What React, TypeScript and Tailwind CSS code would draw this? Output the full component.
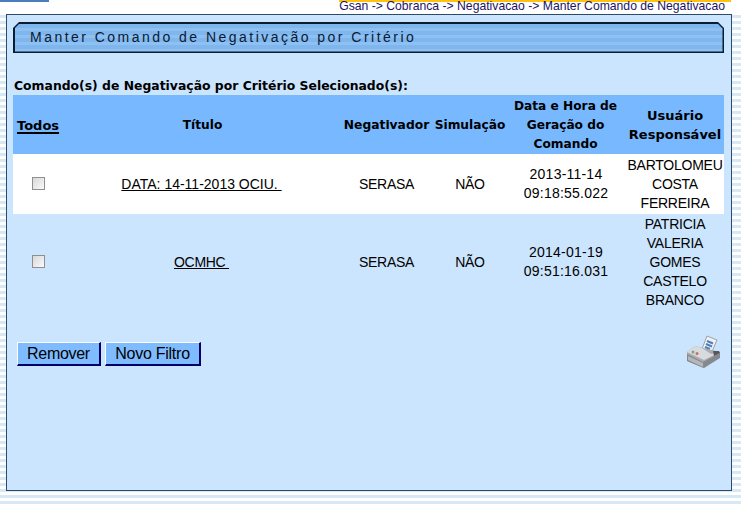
import React from 'react';

const rows = [
  { titulo: 'DATA: 14-11-2013 OCIU. ', data: '2013-11-14', hora: '09:18:55.022', usuario: 'BARTOLOMEU COSTA FERREIRA', bg: 'bg-white', h: 'h-[60px]', track: 'tracking-normal' },
  { titulo: 'OCMHC ', data: '2014-01-19', hora: '09:51:16.031', usuario: 'PATRICIA VALERIA GOMES CASTELO BRANCO', bg: 'bg-[#cbe5fe]', h: 'h-[96px]', track: 'tracking-[-0.3px]' },
];

const Printer = () => (
  <svg width="36" height="34" viewBox="0 0 36 34">
    <path d="M16 14 L21 1 L31 5 L25 19 Z" fill="#eef2f6" stroke="#8a8f96" strokeWidth="0.8" />
    <path d="M21 6 L27 8.5 M20 9 L26 11.5 M19 12 L24 14" stroke="#4f7fb8" strokeWidth="2" />
    <path d="M1 17 L9 11 L34 17 L34 22 L17 33 L1 26 Z" fill="#a9acb0" />
    <path d="M1 17 L9 11 L16 13 L25 19 L34 17 L18 25 Z" fill="#d8dadd" />
    <path d="M1 19 L17 27 L34 18 L34 23 L18 33 L1 26 Z" fill="#85898e" />
    <path d="M2 21 L17 28 L17 32 L2 25 Z" fill="#b4b7bb" />
    <path d="M27 16 L33 16 L34 18 L28 21 Z" fill="#55595e" />
    <circle cx="7" cy="17" r="1.5" fill="#6fb26f" />
    <circle cx="11" cy="18.5" r="1.5" fill="#d06a6a" />
  </svg>
);

export default function App() {
  return (
    <div className="relative w-[741px] h-[505px] overflow-hidden font-['Liberation_Sans',Arial,sans-serif] bg-[repeating-linear-gradient(180deg,#ffffff_0px,#ffffff_3px,#d8e9f6_3px,#d8e9f6_6px)]">
      {/* top strip */}
      <div className="flex h-[2px]">
        <div className="w-[49px] bg-[#4a7ebb]" />
        <div className="w-[290px]" />
        <div className="w-[392px] bg-[#ffc20e]" />
      </div>
      <div className="h-[12px] pr-[16px] text-right text-[12.2px] leading-[9px] text-[#1b1464] whitespace-nowrap bg-white">
        Gsan -&gt; Cobranca -&gt; Negativacao -&gt; Manter Comando de Negativacao
      </div>

      {/* painel */}
      <div className="ml-[6px] w-[726px] h-[477px] border border-[#2d4a6b] bg-[#cbe5fe] pt-[7px] px-[6px]">
        <div className="h-[31px] w-[711px] p-[1.5px] bg-[#0b1d33] [clip-path:polygon(6px_0,705px_0,711px_6px,711px_31px,0_31px,0_6px)]">
          <div className="h-full pl-[15.5px] flex items-center text-[14px] tracking-[2.47px] text-[#0a1a33] whitespace-nowrap [clip-path:polygon(5px_0,703px_0,708px_5px,708px_28px,0_28px,0_5px)] bg-[repeating-linear-gradient(180deg,#7fb6ee_0px,#7fb6ee_4px,#8fc0f2_4px,#8fc0f2_7px)]">
            Manter Comando de Negativação por Critério
          </div>
        </div>

        <div className="mt-[24px] h-[18px] pl-[1px] font-['DejaVu_Sans',Verdana,sans-serif] font-bold text-[12.4px] leading-[17px] text-black whitespace-nowrap">
          Comando(s) de Negativação por Critério Selecionado(s):
        </div>

        <div className="w-[711px] text-[14px] text-black">
          <div className="flex h-[59px] pt-[2px] items-center text-center bg-[#77b8ff] font-['DejaVu_Sans',Verdana,sans-serif] font-bold text-[12.2px] leading-[19px]">
            <div className="w-[52px] shrink-0 text-left pl-[4px] text-[13px] underline decoration-[2px] underline-offset-[2px]">Todos</div>
            <div className="w-[275px] shrink-0">Título</div>
            <div className="w-[91px] shrink-0 ml-[1px] whitespace-nowrap text-[12.3px]">Negativador</div>
            <div className="w-[76px] shrink-0 whitespace-nowrap">Simulação</div>
            <div className="w-[115px] shrink-0">Data e Hora de Geração do Comando</div>
            <div className="w-[96px] shrink-0 ml-[4px] mb-[2px] text-[13px]">Usuário Responsável</div>
          </div>
          {rows.map((r) => (
            <div key={r.titulo} className={`flex items-center text-center leading-[19px] ${r.bg} ${r.h}`}>
              <div className="w-[52px] shrink-0 flex justify-center pr-[1px] mb-[2px]">
                <span className="block w-[13px] h-[13px] border border-[#8f8f8f] bg-gradient-to-br from-[#d8d8d8] to-[#fafafa]" />
              </div>
              <div className="w-[275px] shrink-0 flex justify-center pr-[2px]">
                <span className={`underline whitespace-pre ${r.track}`}>{r.titulo}</span>
              </div>
              <div className="w-[91px] shrink-0 ml-[1px] tracking-[-0.3px]">SERASA</div>
              <div className="w-[76px] shrink-0 tracking-[-0.3px]">NÃO</div>
              <div className="w-[116px] shrink-0 tracking-[0.22px]">{r.data}<br />{r.hora}</div>
              <div className="w-[96px] shrink-0 ml-[3px] tracking-[-0.25px]">{r.usuario}</div>
            </div>
          ))}
        </div>

        <div className="mt-[22px] w-[711px] flex items-start justify-between pl-[4px]">
          <div className="flex gap-[4px] pt-[10px]">
            <button className="w-[84px] h-[24px] text-[16px] tracking-[-0.3px] leading-none text-black bg-[#7fbcff] border border-white border-r-[#000066] border-b-[#000066] border-r-2 border-b-2">Remover</button>
            <button className="w-[96px] h-[24px] text-[16px] tracking-[-0.25px] leading-none text-black bg-[#7fbcff] border border-white border-r-[#000066] border-b-[#000066] border-r-2 border-b-2">Novo Filtro</button>
          </div>
          <div className="mt-[3px] mr-[2px]"><Printer /></div>
        </div>
      </div>
    </div>
  );
}
